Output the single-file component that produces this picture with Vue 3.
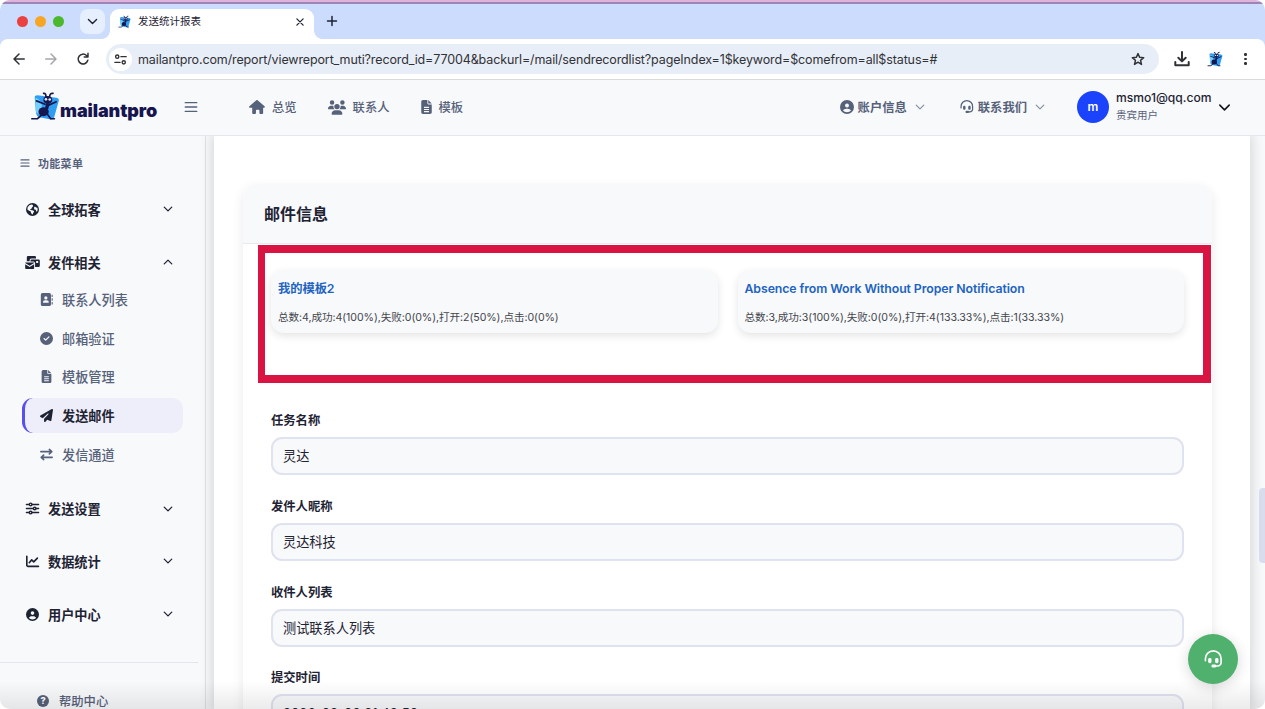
<template>
  <div class="window">
    <svg class="sprite" aria-hidden="true">
      <symbol id="i-down" viewBox="0 0 16 16"><path d="M3 5.5l5 5 5-5" class="line" /></symbol>
      <symbol id="i-up" viewBox="0 0 16 16"><path d="M3 10.5l5-5 5 5" class="line" /></symbol>
      <symbol id="i-menu" viewBox="0 0 16 16"><path d="M1.500 3h13M1.500 8h13M1.500 13h13" class="line" /></symbol>
      <symbol id="i-home" viewBox="0 0 576 512"><path d="M575.8 255.5c0 18-15 32.1-32 32.1h-32l.7 160.2c0 2.7-.2 5.4-.5 8.1V472c0 22.1-17.9 40-40 40h-55c-22.1 0-40-17.9-40-40v-88c0-17.700-14.300-32-32-32h-64c-17.700 0-32 14.300-32 32v88c0 22.100-17.900 40-40 40h-56c-22.100 0-40-17.900-40-40V287.600H32c-18 0-32-14-32-32.100c0-9 3-17 10-24L266.400 8c7-7 15-8 22-8s15 2 21 7l255.400 224.500c8 7 12 15 11 24z" /></symbol>
      <symbol id="i-users" viewBox="0 0 640 512"><path d="M144 0a80 80 0 1 1 0 160A80 80 0 1 1 144 0zM512 0a80 80 0 1 1 0 160A80 80 0 1 1 512 0zM0 298.700C0 239.800 47.800 192 106.700 192h42.700c15.900 0 31 3.500 44.600 9.700-1.300 7.200-1.900 14.700-1.900 22.300 0 38.200 16.800 72.500 43.300 96H21.300C9.600 320 0 310.400 0 298.700zM404.600 320c26.600-23.500 43.300-57.800 43.300-96 0-7.600-.7-15-1.900-22.300 13.600-6.300 28.700-9.700 44.600-9.700h42.700C592.200 192 640 239.800 640 298.700c0 11.800-9.600 21.300-21.300 21.300H404.600zM224 224a96 96 0 1 1 192 0 96 96 0 1 1-192 0zM128 485.300C128 411.700 187.700 352 261.300 352h117.400C452.300 352 512 411.700 512 485.300c0 14.700-11.900 26.700-26.700 26.700H154.700c-14.700 0-26.700-11.900-26.700-26.700z" /></symbol>
      <symbol id="i-file" viewBox="0 0 384 512"><path fill-rule="evenodd" d="M64 0C28.700 0 0 28.700 0 64v384c0 35.300 28.700 64 64 64h256c35.300 0 64-28.700 64-64V160H256c-17.700 0-32-14.300-32-32V0H64zm192 0v128h128L256 0zM100 248h184v42H100zM100 326h184v42H100zM100 404h184v42H100z" /></symbol>
      <symbol id="i-user" viewBox="0 0 512 512"><path d="M399 384.200C376.900 345.800 335.400 320 288 320h-64c-47.400 0-88.900 25.800-111 64.200 35.200 39.200 86.200 63.800 143 63.800s107.800-24.700 143-63.800zM0 256a256 256 0 1 1 512 0A256 256 0 1 1 0 256zm256 16a72 72 0 1 0 0-144 72 72 0 1 0 0 144z" /></symbol>
      <symbol id="i-headset" viewBox="0 0 16 16"><path d="M1.200 9V7.300a6.600 6.600 0 0 1 13.200 0v3.200a3 3 0 0 1-3 3H9" class="line thin" /><rect x="3.500" y="6.700" width="2.800" height="4.400" rx="1.200" /><rect x="9.400" y="6.700" width="2.800" height="4.400" rx="1.200" /><rect x="6.300" y="12.300" width="4" height="2.500" rx="1.200" /></symbol>
      <symbol id="i-globe" viewBox="0 0 16 16"><path fill-rule="evenodd" d="M8 0a8 8 0 1 1 0 16A8 8 0 0 1 8 0zM2 5.300L1.700 8l2 1.500 2 .6.300 1.500 1.300 2.200 1 .3.500-1.800 1.200-1.500-.6-1.400-1.800-.6L6 8.600 4.900 7.700l1.800-.5.600-1.600 1.500-1.500-.6-2-1.500-.4-2.600 1.200zM11 4.200l-1.300 1.700.6 2 1.800.5.700 2.300 1-.5.600-2.200-.4-2.200-1.500-.2z" /></symbol>
      <symbol id="i-mail" viewBox="0 0 18 16"><path d="M3.500 0h8.300a1.500 1.500 0 0 1 1.500 1.500V3H7.500a2 2 0 0 0-2 2v1.500H2V1.500A1.500 1.500 0 0 1 3.500 0z" /><path fill-rule="evenodd" d="M8 4.200h8.500A1.500 1.500 0 0 1 18 5.700V12a1.500 1.500 0 0 1-1.500 1.500h-4.300V9a2.200 2.200 0 0 0-2.200-2.200H6.500V5.700A1.500 1.500 0 0 1 8 4.200zm5.500 2v2.300H16V6.200z" /><path d="M0 8.600L5.500 12 11 8.600V8H0zM0 10.200V15a1 1 0 0 0 1 1h9a1 1 0 0 0 1-1v-4.800L5.500 13.600z" /></symbol>
      <symbol id="i-book" viewBox="0 0 16 16"><path fill-rule="evenodd" d="M3 0h8.500a2 2 0 0 1 2 2v12a2 2 0 0 1-2 2H3a2 2 0 0 1-2-2V2a2 2 0 0 1 2-2zm4.200 4a2 2 0 1 0 0 4 2 2 0 0 0 0-4zM3.800 12h6.900a2.700 2.700 0 0 0-2.700-3H6.500a2.700 2.700 0 0 0-2.700 3z" /><path d="M14.300 2h1.300v3h-1.300zM14.300 6.500h1.300v3h-1.300zM14.300 11h1.300v3h-1.300z" /></symbol>
      <symbol id="i-check" viewBox="0 0 512 512"><path d="M256 512a256 256 0 1 0 0-512 256 256 0 1 0 0 512zM369 209L241 337c-9.400 9.400-24.600 9.400-33.900 0l-64-64c-9.400-9.400-9.400-24.600 0-33.900s24.600-9.400 33.900 0l47 47L335 175c9.400-9.400 24.600-9.400 33.900 0s9.400 24.600 0 33.900z" /></symbol>
      <symbol id="i-plane" viewBox="0 0 512 512"><path d="M498.100 5.600c10.100 7 15.400 19.100 13.500 31.200l-64 416c-1.500 9.700-7.400 18.200-16 23s-18.900 5.400-28 1.600L284 427.700l-68.500 74.100c-8.900 9.700-22.900 12.900-35.200 8.100S160 493.200 160 480v-83.600c0-4 1.500-7.800 4.200-10.800l167.600-182.800c5.800-6.300 5.600-16-.4-22s-15.700-6.400-22-.7L106 360.800 17.700 316.600C7.100 311.300.3 300.700 0 288.900s5.900-22.800 16.100-28.700l448-256c10.700-6.100 23.900-5.500 34 1.400z" /></symbol>
      <symbol id="i-swap" viewBox="0 0 16 16"><path d="M1 4.500h13M11.500 1.800l3 2.700-3 2.700M15 11.500H2M4.500 8.800l-3 2.700 3 2.700" class="line bold" /></symbol>
      <symbol id="i-sliders" viewBox="0 0 16 16"><path d="M.5 3H4M7.500 3h8M.5 8H9M12.500 8h3M.5 13H4M7.500 13h8" class="line" /><circle cx="5.700" cy="3" r="1.600" class="line" /><circle cx="10.700" cy="8" r="1.600" class="line" /><circle cx="5.700" cy="13" r="1.600" class="line" /></symbol>
      <symbol id="i-chart" viewBox="0 0 16 16"><path d="M1 1.500v11A1.500 1.500 0 0 0 2.500 14h12.800M4 9.500L7 6l2.500 2.500L14 3.800" class="line bold" /></symbol>
      <symbol id="i-back" viewBox="0 0 16 16"><path d="M14 8H2.500M8 2.300L2.300 8 8 13.700" class="line" /></symbol>
      <symbol id="i-reload" viewBox="0 0 16 16"><path d="M13.500 9.500A5.600 5.600 0 1 1 12 4l1.500 1.500M13.700 1.500v4.300H9.400" class="line" /></symbol>
      <symbol id="i-tune" viewBox="0 0 16 16"><circle cx="4" cy="4.500" r="2" class="line" /><path d="M8.500 4.500H15M1 11.500h6.500" class="line" /><circle cx="12" cy="11.500" r="2" class="line" /></symbol>
      <symbol id="i-star" viewBox="0 0 16 16"><path d="M8 1.800l1.800 4.300 4.700.4-3.600 3.100 1.100 4.600L8 11.700l-4 2.500 1.100-4.600-3.600-3.100 4.700-.4z" class="line" /></symbol>
      <symbol id="i-download" viewBox="0 0 16 16"><path d="M8 1v9M4.300 6.700L8 10.400l3.700-3.700M1.300 11v3.300h13.400V11" class="line bold" /></symbol>
      <symbol id="i-close" viewBox="0 0 16 16"><path d="M3 3l10 10M13 3L3 13" class="line bold" /></symbol>
      <symbol id="i-plus" viewBox="0 0 16 16"><path d="M8 2v12M2 8h12" class="line bold" /></symbol>
      <symbol id="i-ant" viewBox="0 0 32 32">
        <path d="M5 6q0-2.500 3-2.500L28 6q3 .5 2.800 3L26 26q-1 4-5 3L10 27q-3-1-3.500-4z" fill="#2f9df2" />
        <path d="M6 6q10 4 5 17-4 1-5-3z" fill="#74d0fd" />
        <path d="M17 5Q17 1 14.500 1.500M21 5q0-4 3.500-3.500M16 13L7 9.500M20 14l8-3.500M13 24l-5 4.500H2M18 23l4 5.500h4" fill="none" stroke="#17174f" stroke-width="1.800" stroke-linecap="round" />
        <ellipse cx="19" cy="8.500" rx="4.800" ry="4.200" fill="#17174f" />
        <path d="M17 12h4l-1.500 6H16z" fill="#17174f" />
        <ellipse cx="14.500" cy="21" rx="5.500" ry="4.800" fill="#17174f" />
        <circle cx="17" cy="7.800" r="1.400" fill="#dfeeff" /><circle cx="21" cy="8" r="1.400" fill="#dfeeff" />
      </symbol>
    </svg>

    <div class="tabstrip">
      <span class="dot red"></span>
      <span class="dot amber"></span>
      <span class="dot green"></span>
      <span class="tab-search"><svg><use href="#i-down" /></svg></span>
      <div class="tab">
        <svg class="favicon"><use href="#i-ant" /></svg>
        <span class="tab-title">发送统计报表</span>
        <svg class="tab-close"><use href="#i-close" /></svg>
      </div>
      <svg class="tab-new"><use href="#i-plus" /></svg>
    </div>

    <div class="toolbar">
      <svg class="nav-btn"><use href="#i-back" /></svg>
      <svg class="nav-btn forward"><use href="#i-back" /></svg>
      <svg class="nav-btn"><use href="#i-reload" /></svg>
      <div class="omnibox">
        <span class="site-info"><svg><use href="#i-tune" /></svg></span>
        <span class="url">{{ url }}</span>
        <svg class="star"><use href="#i-star" /></svg>
      </div>
      <svg class="download"><use href="#i-download" /></svg>
      <svg class="extension"><use href="#i-ant" /></svg>
      <span class="kebab"><i></i><i></i><i></i></span>
    </div>

    <header class="header">
      <svg class="logo-ant"><use href="#i-ant" /></svg>
      <span class="logo-text">mailantpro</span>
      <svg class="burger"><use href="#i-menu" /></svg>
      <nav class="topnav">
        <a v-for="item in topNav" :key="item.label">
          <svg :class="item.icon"><use :href="'#i-' + item.icon" /></svg>{{ item.label }}
        </a>
      </nav>
      <div class="account">
        <a><svg><use href="#i-user" /></svg>账户信息<svg class="caret"><use href="#i-down" /></svg></a>
        <a><svg><use href="#i-headset" /></svg>联系我们<svg class="caret"><use href="#i-down" /></svg></a>
      </div>
      <span class="avatar">m</span>
      <div class="who">
        <strong>msmo1@qq.com</strong>
        <small>贵宾用户</small>
      </div>
      <svg class="who-caret"><use href="#i-down" /></svg>
    </header>

    <div class="body">
      <aside class="sidebar">
        <div class="menu-title"><svg><use href="#i-menu" /></svg>功能菜单</div>
        <template v-for="group in menu" :key="group.label">
          <div class="group">
            <svg class="group-icon"><use :href="'#i-' + group.icon" /></svg>
            <span>{{ group.label }}</span>
            <svg class="group-caret"><use :href="group.items ? '#i-up' : '#i-down'" /></svg>
          </div>
          <ul v-if="group.items" class="submenu">
            <li v-for="item in group.items" :key="item.label" :class="{ active: item.active }">
              <svg><use :href="'#i-' + item.icon" /></svg>{{ item.label }}
            </li>
          </ul>
        </template>
        <div class="help"><span class="help-icon">?</span>帮助中心</div>
      </aside>

      <main class="main">
        <section class="card">
          <h2>邮件信息</h2>
          <div class="templates">
            <div v-for="t in templates" :key="t.name" class="template">
              <h3>{{ t.name }}</h3>
              <p>{{ t.stats }}</p>
            </div>
          </div>
          <div v-for="f in fields" :key="f.label" class="field">
            <label>{{ f.label }}</label>
            <div class="input">{{ f.value }}</div>
          </div>
          <div class="marker"></div>
        </section>
      </main>
      <div class="scroll"><div class="thumb"></div></div>
    </div>

    <div class="fade"></div>
    <button class="support"><svg><use href="#i-headset" /></svg></button>
  </div>
</template>

<script setup>
const url = 'mailantpro.com/report/viewreport_muti?record_id=77004&backurl=/mail/sendrecordlist?pageIndex=1$keyword=$comefrom=all$status=#'

const topNav = [
  { icon: 'home', label: '总览' },
  { icon: 'users', label: '联系人' },
  { icon: 'file', label: '模板' }
]

const menu = [
  { icon: 'globe', label: '全球拓客' },
  {
    icon: 'mail',
    label: '发件相关',
    items: [
      { icon: 'book', label: '联系人列表' },
      { icon: 'check', label: '邮箱验证' },
      { icon: 'file', label: '模板管理' },
      { icon: 'plane', label: '发送邮件', active: true },
      { icon: 'swap', label: '发信通道' }
    ]
  },
  { icon: 'sliders', label: '发送设置' },
  { icon: 'chart', label: '数据统计' },
  { icon: 'user', label: '用户中心' }
]

const templates = [
  { name: '我的模板2', stats: '总数:4,成功:4(100%),失败:0(0%),打开:2(50%),点击:0(0%)' },
  { name: 'Absence from Work Without Proper Notification', stats: '总数:3,成功:3(100%),失败:0(0%),打开:4(133.33%),点击:1(33.33%)' }
]

const fields = [
  { label: '任务名称', value: '灵达' },
  { label: '发件人昵称', value: '灵达科技' },
  { label: '收件人列表', value: '测试联系人列表' },
  { label: '提交时间', value: '2026-02-02 21:42:50' }
]
</script>

<style>
body {
  margin: 0;
  background: #fff;
}
</style>

<style scoped>
* {
  box-sizing: border-box;
}
.window {
  position: relative;
  display: flex;
  flex-direction: column;
  height: 709px;
  overflow: hidden;
  border-radius: 10px;
  background: #f8f9fb;
  font-family: Inter, "Noto Sans CJK SC", sans-serif;
  color: #1e2333;
}
svg {
  flex: none;
  fill: currentColor;
}
.sprite {
  position: absolute;
  width: 0;
  height: 0;
}
.line {
  fill: none;
  stroke: currentColor;
  stroke-width: 1.7;
  stroke-linecap: round;
  stroke-linejoin: round;
}
.thin {
  stroke-width: 1.4;
}
.bold {
  stroke-width: 2;
}

/* Browser chrome */
.tabstrip {
  flex: none;
  display: flex;
  align-items: center;
  height: 47px;
  margin-bottom: -8px;
  padding: 1px 0 8px 17px;
  border-top: 2px solid #e0b3dc;
  background: #cbdcfd;
  box-shadow: inset 0 2px 0 #9d86b5;
}
.dot {
  width: 11px;
  height: 11px;
  margin-right: 7px;
  border-radius: 50%;
}
.red { background: #ea4040; }
.amber { background: #f6a623; }
.green { background: #4cb92d; }
.tab-search {
  display: flex;
  align-items: center;
  justify-content: center;
  width: 25px;
  height: 25px;
  margin-left: 9px;
  border-radius: 8px;
  background: #e6effe;
}
.tab-search svg {
  width: 13px;
  height: 13px;
}
.tab {
  position: relative;
  align-self: stretch;
  display: flex;
  align-items: center;
  width: 204px;
  margin: 6px 0 0 5px;
  padding: 0 9px 5px 8px;
  border-radius: 9px 9px 0 0;
  background: #fff;
}
/* Curved feet of the active tab */
.tab::before,
.tab::after {
  content: "";
  position: absolute;
  bottom: 0;
  width: 8px;
  height: 8px;
}
.tab::before {
  right: 100%;
  background: radial-gradient(circle at 0 0, transparent 7.5px, #fff 8px);
}
.tab::after {
  left: 100%;
  background: radial-gradient(circle at 100% 0, transparent 7.5px, #fff 8px);
}
.favicon {
  width: 13px;
  height: 14px;
  margin-right: 7px;
}
.tab-title {
  flex: 1;
  font-size: 10.5px;
  line-height: 14px;
}
.tab-close {
  width: 10px;
  height: 10px;
}
.tab-new {
  width: 12px;
  height: 12px;
  margin-left: 12px;
}
.toolbar {
  position: relative;
  flex: none;
  display: flex;
  align-items: center;
  height: 41px;
  padding-left: 12px;
  border-bottom: 1px solid #d9dbd9;
  border-radius: 8px 8px 0 0;
  background: #fff;
  color: #303236;
}
.nav-btn {
  width: 14px;
  height: 14px;
  margin-right: 18px;
}
.forward {
  color: #a4a6aa;
  transform: scaleX(-1);
}
.omnibox {
  display: flex;
  align-items: center;
  width: 1053px;
  height: 30px;
  margin-left: -2px;
  padding: 0 14px 0 3px;
  border-radius: 15px;
  background: #e8eef8;
}
.site-info {
  display: flex;
  align-items: center;
  justify-content: center;
  width: 23px;
  height: 23px;
  border-radius: 50%;
  background: #fff;
}
.site-info svg {
  width: 13px;
  height: 13px;
}
.url {
  flex: 1;
  margin-left: 6px;
  font-size: 12.5px;
  letter-spacing: -0.123px;
  white-space: nowrap;
}
.star {
  width: 14px;
  height: 14px;
}
.download {
  width: 16px;
  height: 16px;
  margin-left: 15px;
}
.extension {
  width: 16px;
  height: 17px;
  margin-left: 17px;
}
.kebab {
  display: flex;
  flex-direction: column;
  gap: 2px;
  margin-left: 21px;
}
.kebab i {
  width: 2.5px;
  height: 2.5px;
  border-radius: 50%;
  background: #303236;
}

/* Site header */
.header {
  position: relative;
  z-index: 2;
  flex: none;
  display: flex;
  align-items: center;
  height: 56px;
  padding: 0 0 1px 30px;
  border-bottom: 1px solid #e5e7ec;
  background: #f8f9fb;
  color: #56617a;
}
.logo-ant {
  width: 30px;
  height: 30px;
}
.logo-text {
  width: 98px;
  margin-top: 7px;
  color: #17154f;
  font-size: 18px;
  font-weight: 900;
  letter-spacing: -0.1px;
}
.burger {
  width: 14px;
  height: 14px;
  margin-left: 26px;
}
.topnav {
  display: flex;
  margin-left: 51px;
}
.topnav a,
.account a {
  display: flex;
  align-items: center;
  font-size: 12.3px;
  font-weight: 500;
}
.topnav svg {
  width: 16px;
  height: 14px;
  margin-right: 7px;
}
.topnav a + a {
  margin-left: 31px;
}
.topnav .users {
  width: 18px;
  height: 15px;
}
.topnav .file {
  width: 11px;
}
.account {
  display: flex;
  gap: 34px;
  margin-left: auto;
}
.account a {
  font-weight: 600;
}
.account svg {
  width: 14px;
  height: 14px;
  margin-right: 4px;
}
.account .caret {
  width: 12px;
  height: 12px;
  margin: 0 0 0 7px;
  color: #8a92a3;
}
.avatar {
  width: 32px;
  height: 32px;
  margin-left: 31px;
  border-radius: 50%;
  background: #1a43fb;
  color: #fff;
  font-size: 12px;
  font-weight: 600;
  line-height: 32px;
  text-align: center;
}
.who {
  display: flex;
  flex-direction: column;
  width: 95px;
  margin-left: 7px;
}
.who strong {
  color: #1e2333;
  font-size: 12.1px;
  font-weight: 500;
  line-height: 17px;
}
.who small {
  font-size: 10.5px;
  line-height: 19px;
}
.who-caret {
  width: 15px;
  height: 15px;
  margin: 0 33px 0 6px;
  color: #15171e;
}

/* Sidebar */
.body {
  flex: 1;
  display: flex;
  min-height: 0;
  overflow: hidden;
}
.sidebar {
  flex: none;
  width: 206px;
  padding-top: 17px;
  border-right: 1px solid #dfe2e8;
}
.menu-title {
  display: flex;
  align-items: center;
  gap: 8px;
  height: 20px;
  padding-left: 20px;
  color: #56617a;
  font-size: 11px;
  font-weight: 600;
  letter-spacing: 0.3px;
}
.menu-title svg {
  width: 10px;
  height: 10px;
}
.group {
  display: flex;
  align-items: center;
  height: 52.7px;
  padding: 0 30px 0 25px;
  font-size: 13.2px;
  font-weight: 600;
}
.menu-title + .group {
  margin-top: 10px;
}
.group span {
  flex: 1;
}
.group-icon {
  width: 15px;
  height: 13px;
  margin-right: 8px;
}
.group-caret {
  width: 14px;
  height: 12px;
}
.submenu {
  margin: -6.5px 0 10.5px;
  padding: 0 22px;
  list-style: none;
}
.submenu li {
  display: flex;
  align-items: center;
  height: 34.8px;
  margin-bottom: 4px;
  padding-left: 15px;
  border-left: 3px solid transparent;
  border-radius: 11px;
  color: #56617a;
  font-size: 13.2px;
  font-weight: 500;
}
.submenu svg {
  width: 13px;
  height: 13px;
  margin-right: 9px;
}
.submenu .active {
  border-left-color: #584ff0;
  background: #eeeefa;
  color: #1e2333;
  font-weight: 600;
}
.help {
  display: flex;
  align-items: center;
  width: 198px;
  height: 76px;
  margin-top: 22px;
  padding-left: 37px;
  border-top: 1px solid #e3e6eb;
  color: #56617a;
  font-size: 12.3px;
  font-weight: 500;
}
.help-icon {
  width: 12px;
  height: 12px;
  margin-right: 10px;
  border-radius: 50%;
  background: #56617a;
  color: #fff;
  font-size: 9px;
  font-weight: 800;
  line-height: 12px;
  text-align: center;
}

/* Report content */
.main {
  flex: none;
  width: 1036px;
  margin-left: 8px;
  padding: 49px 38px 0 29px;
  background: #fff;
  box-shadow: 0 0 12px 2px rgba(0, 0, 0, 0.14);
}
.card {
  position: relative;
  height: 600px;
  border-radius: 13px;
  background: #fff;
  box-shadow: 0 3px 12px rgba(0, 0, 0, 0.09);
}
.card h2 {
  height: 59px;
  margin: 0;
  padding-left: 21px;
  border-bottom: 1px solid #e8eaee;
  border-radius: 13px 13px 0 0;
  background: #f8f9fb;
  font-size: 16px;
  font-weight: 600;
  line-height: 59px;
}
.templates {
  display: flex;
  gap: 20px;
  height: 167px;
  padding: 26px 28px 0;
}
.template {
  flex: 1;
  height: 63px;
  padding: 8px 7px 0;
  border-radius: 13px;
  background: #f8f9fb;
  box-shadow: 0 3px 9px rgba(0, 0, 0, 0.11);
}
.template h3 {
  margin: 0;
  color: #2063c0;
  font-size: 12.3px;
  font-weight: 600;
  letter-spacing: -0.08px;
  line-height: 22px;
}
.template p {
  margin: 9px 0 0;
  color: #44464d;
  font-size: 10.6px;
  letter-spacing: -0.06px;
  line-height: 18px;
}
.field {
  height: 85.8px;
  padding: 0 28px;
}
.field label {
  display: block;
  height: 26px;
  font-size: 12.3px;
  font-weight: 600;
  line-height: 19px;
}
.input {
  height: 38px;
  padding-left: 10px;
  border: 2px solid #dfe2ef;
  border-radius: 11px;
  background: #f8f9fb;
  font-size: 13.2px;
  line-height: 34px;
}
/* Red frame drawn over the template list */
.marker {
  position: absolute;
  top: 60px;
  left: 15px;
  width: 953px;
  height: 138px;
  border: 8px solid #d91443;
  border-left-width: 7px;
}
.scroll {
  flex: 1;
  display: flex;
  justify-content: flex-end;
}
.thumb {
  width: 6px;
  height: 75px;
  margin-top: 352px;
  border-radius: 4px 0 0 4px;
  background: #d9dcec;
}
.fade {
  position: absolute;
  right: 0;
  bottom: 0;
  left: 0;
  height: 28px;
  background: linear-gradient(rgba(0, 0, 0, 0), rgba(0, 0, 0, 0.08));
}
.support {
  position: absolute;
  right: 27px;
  bottom: 25px;
  display: flex;
  align-items: center;
  justify-content: center;
  width: 50px;
  height: 50px;
  padding: 0;
  border: 0;
  border-radius: 50%;
  background: #50b06e;
  box-shadow: 0 3px 14px rgba(0, 0, 0, 0.16);
  color: #fff;
}
.support svg {
  width: 19px;
  height: 19px;
}
</style>
